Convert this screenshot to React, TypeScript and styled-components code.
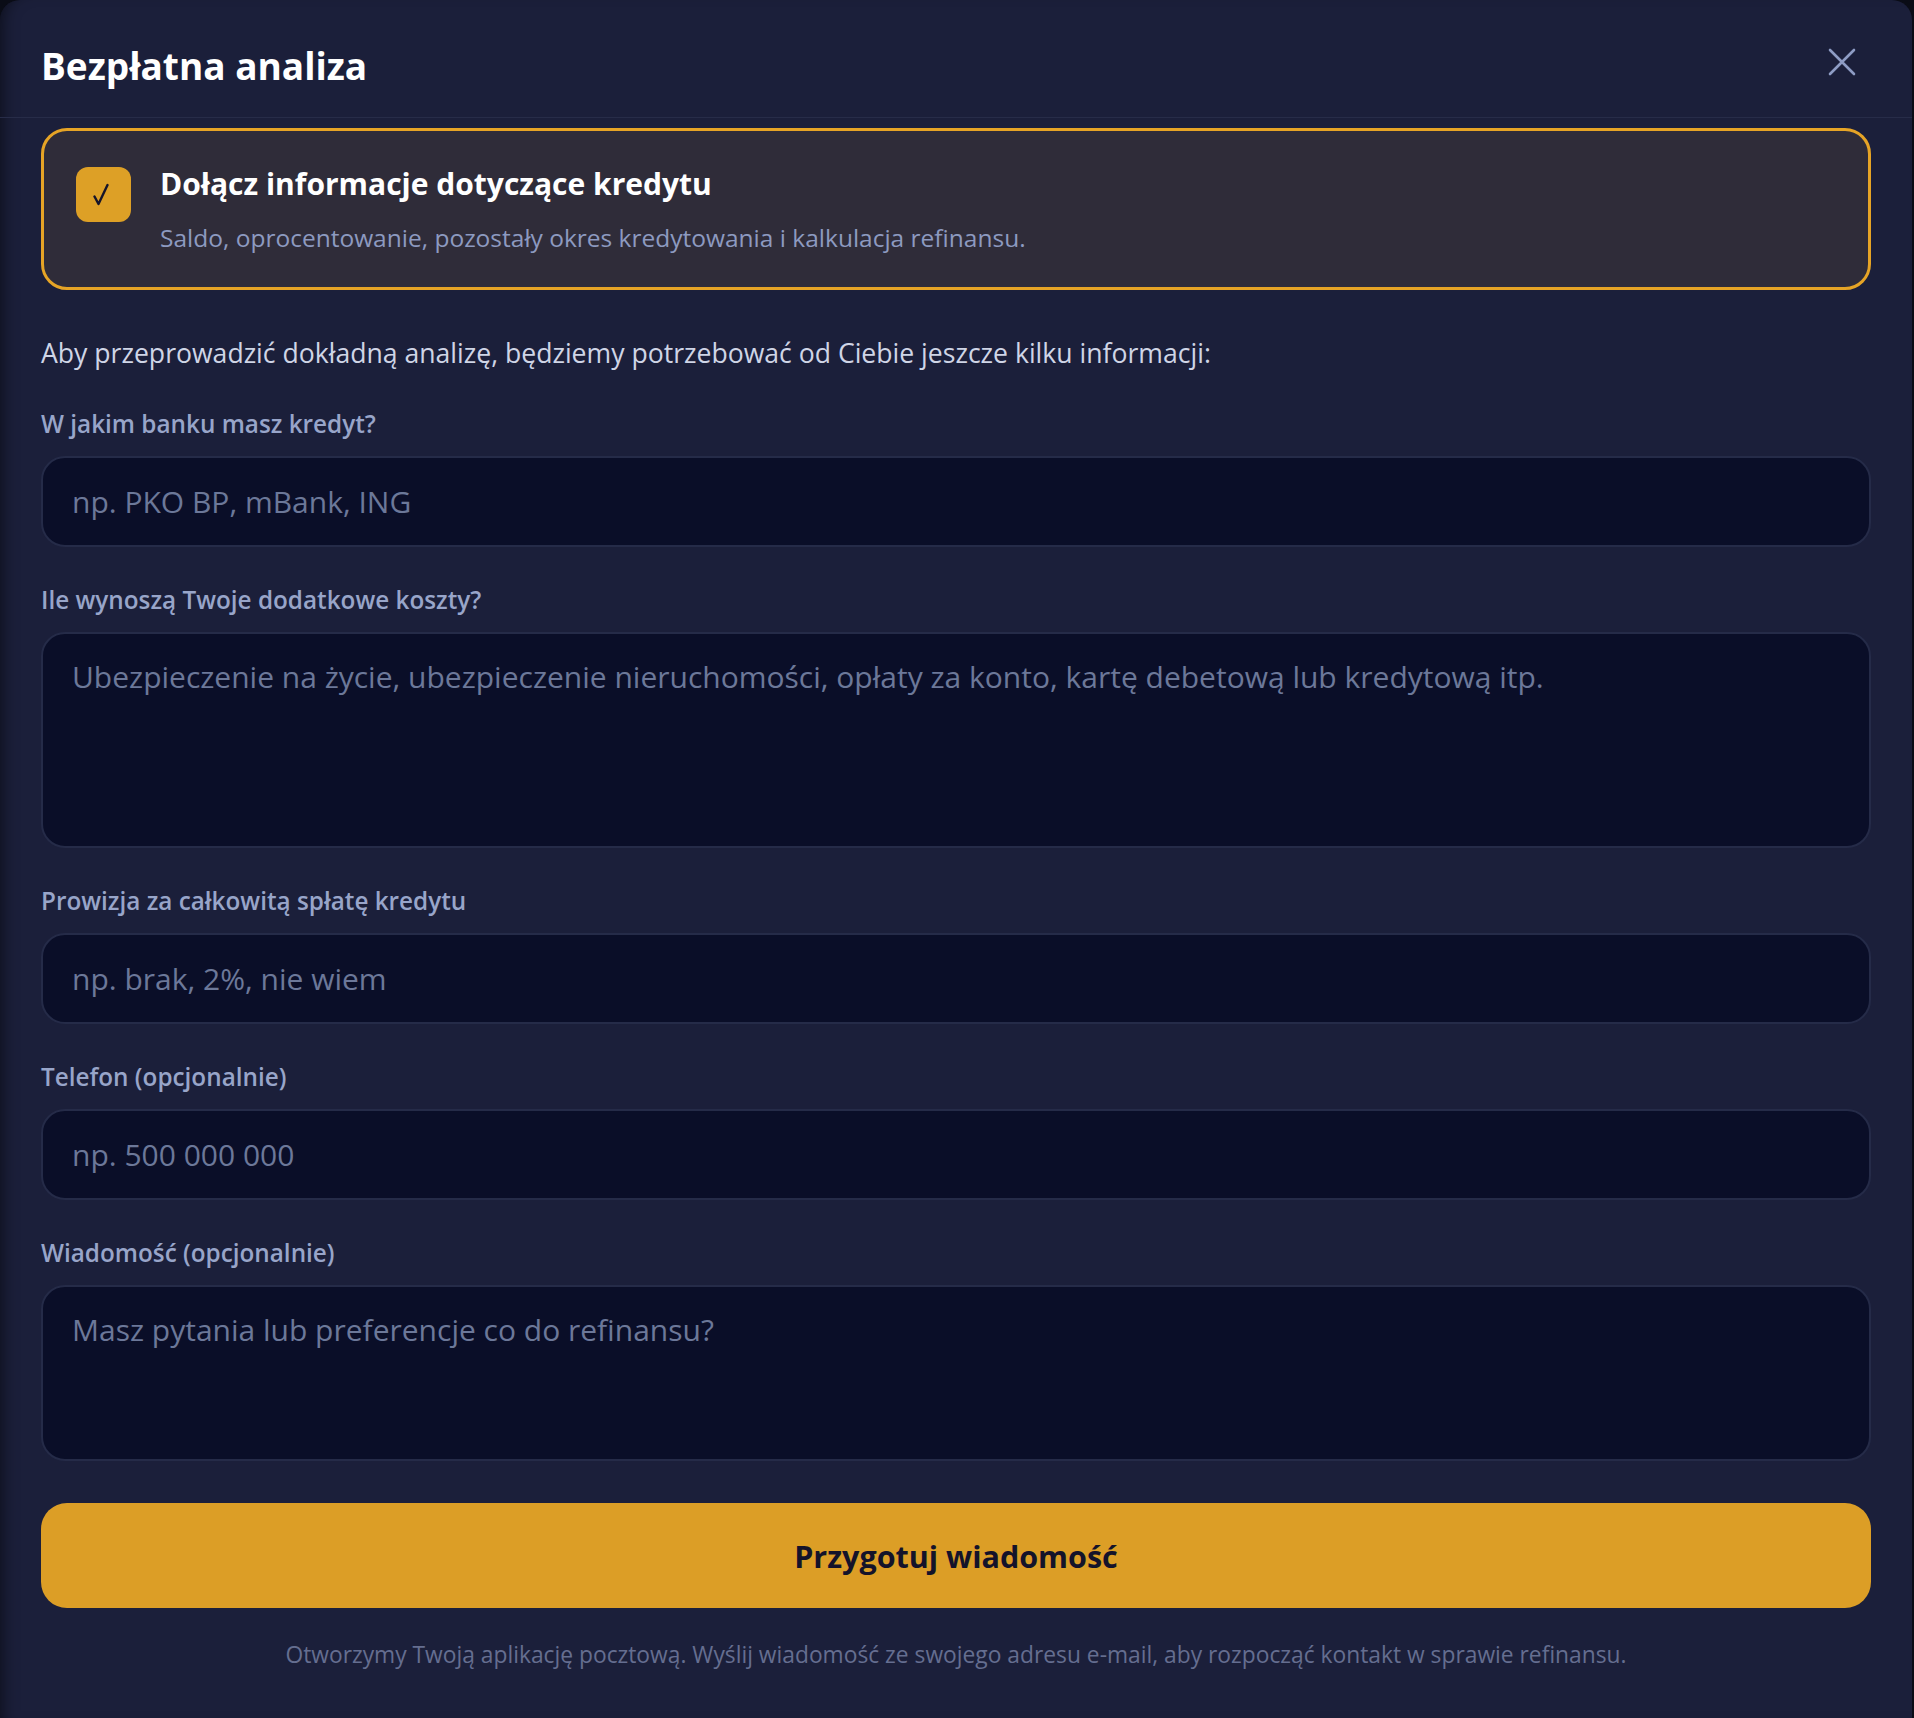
import React from 'react'
import styled, { createGlobalStyle } from 'styled-components'

const GlobalStyle = createGlobalStyle`
  * {
    box-sizing: border-box;
  }
  html,
  body {
    margin: 0;
    padding: 0;
    background: #0a0c16;
  }
  body {
    font-family: 'Open Sans', 'Noto Sans', sans-serif;
  }
`

const Modal = styled.div`
  width: 1912px;
  min-height: 1718px;
  background: #1b1f3a;
  border-radius: 20px 20px 0 0;
  box-shadow: inset 14px 0 16px -12px rgba(0, 0, 0, 0.55);
  display: flex;
  flex-direction: column;
`

const Header = styled.header`
  height: 118px;
  padding: 0 41px;
  display: flex;
  justify-content: space-between;
  align-items: center;
  border-bottom: 1px solid #272c48;
`

const Title = styled.h2`
  margin: 0;
  padding-top: 14px;
  font-size: 37px;
  line-height: 44px;
  font-weight: 700;
  color: #ffffff;
`

const CloseButton = styled.button`
  width: 58px;
  height: 58px;
  margin-top: 7px;
  padding: 0;
  border: none;
  background: transparent;
  display: flex;
  align-items: center;
  justify-content: center;
  cursor: pointer;
  color: #8e9cc4;
`

const Body = styled.div`
  padding: 10px 41px 48px;
  display: flex;
  flex-direction: column;
`

const ConsentCard = styled.label`
  display: flex;
  align-items: flex-start;
  gap: 29px;
  padding: 35px 32px 33px;
  border: 3px solid #e6a426;
  border-radius: 26px;
  background: #2f2c39;
  cursor: pointer;
`

const CheckBox = styled.span<{ $checked: boolean }>`
  flex: none;
  width: 55px;
  height: 55px;
  margin-top: 1px;
  border-radius: 12px;
  background: ${(p) => (p.$checked ? '#dda026' : 'transparent')};
  display: flex;
  align-items: center;
  justify-content: center;
  color: #15142a;
  padding-right: 5px;
`

const CardText = styled.div`
  display: flex;
  flex-direction: column;
  gap: 20px;
`

const CardTitle = styled.span`
  font-size: 30px;
  line-height: 36px;
  font-weight: 700;
  color: #ffffff;
`

const CardHint = styled.span`
  font-size: 24.5px;
  line-height: 32px;
  color: #8d9ac0;
`

const Intro = styled.p`
  margin: 45px 0 0;
  font-size: 26.6px;
  line-height: 36px;
  color: #cfd5e6;
`

const Fields = styled.div`
  margin-top: 37px;
  display: flex;
  flex-direction: column;
  gap: 37px;
`

const Field = styled.div`
  display: flex;
  flex-direction: column;
  gap: 16px;
`

const Label = styled.label`
  font-size: 24.3px;
  line-height: 32px;
  font-weight: 600;
  color: #98a5c9;
`

const controlStyles = `
  width: 100%;
  margin: 0;
  border: 2px solid #252b48;
  border-radius: 24px;
  background: #0a0e28;
  font-family: 'Open Sans', 'Noto Sans', sans-serif;
  font-size: 30px;
  color: #e4e8f4;
  outline: none;
  &::placeholder {
    color: #6c7899;
    opacity: 1;
  }
`

const Input = styled.input`
  ${controlStyles}
  height: 91px;
  padding: 0 29px;
`

const TextArea = styled.textarea<{ $height: number }>`
  ${controlStyles}
  height: ${(p) => p.$height}px;
  padding: 23px 29px;
  line-height: 40px;
  resize: none;
`

const SubmitButton = styled.button`
  margin-top: 42px;
  height: 105px;
  width: 100%;
  border: none;
  border-radius: 26px;
  background: #dc9e26;
  font-family: 'Open Sans', 'Noto Sans', sans-serif;
  font-size: 30.5px;
  font-weight: 700;
  color: #14132a;
  cursor: pointer;
`

const Footnote = styled.p`
  margin: 32px 0 0;
  text-align: center;
  font-size: 22.8px;
  line-height: 30px;
  color: #656e90;
`

const CloseIcon = () => (
  <svg width='28' height='28' viewBox='0 0 28 28' fill='none'>
    <path
      d='M2 2L26 26M26 2L2 26'
      stroke='currentColor'
      strokeWidth='2.6'
      strokeLinecap='round'
    />
  </svg>
)

const CheckIcon = () => (
  <svg width='16' height='24' viewBox='0 0 16 24' fill='none'>
    <path
      d='M1.5 13.5L5.5 21L14.5 2'
      stroke='currentColor'
      strokeWidth='2.4'
      strokeLinecap='round'
      strokeLinejoin='round'
    />
  </svg>
)

interface FieldDef {
  id: string
  label: string
  placeholder: string
  rows?: number
}

const fields: FieldDef[] = [
  { id: 'bank', label: 'W jakim banku masz kredyt?', placeholder: 'np. PKO BP, mBank, ING' },
  {
    id: 'costs',
    label: 'Ile wynoszą Twoje dodatkowe koszty?',
    placeholder:
      'Ubezpieczenie na życie, ubezpieczenie nieruchomości, opłaty za konto, kartę debetową lub kredytową itp.',
    rows: 216,
  },
  { id: 'fee', label: 'Prowizja za całkowitą spłatę kredytu', placeholder: 'np. brak, 2%, nie wiem' },
  { id: 'phone', label: 'Telefon (opcjonalnie)', placeholder: 'np. 500 000 000' },
  {
    id: 'message',
    label: 'Wiadomość (opcjonalnie)',
    placeholder: 'Masz pytania lub preferencje co do refinansu?',
    rows: 176,
  },
]

const App: React.FC = () => {
  const [includeLoan, setIncludeLoan] = React.useState(true)

  return (
    <>
      <GlobalStyle />
      <Modal>
        <Header>
          <Title>Bezpłatna analiza</Title>
          <CloseButton aria-label='Zamknij'>
            <CloseIcon />
          </CloseButton>
        </Header>
        <Body>
          <ConsentCard onClick={() => setIncludeLoan(!includeLoan)}>
            <CheckBox $checked={includeLoan}>{includeLoan && <CheckIcon />}</CheckBox>
            <CardText>
              <CardTitle>Dołącz informacje dotyczące kredytu</CardTitle>
              <CardHint>
                Saldo, oprocentowanie, pozostały okres kredytowania i kalkulacja refinansu.
              </CardHint>
            </CardText>
          </ConsentCard>

          <Intro>
            Aby przeprowadzić dokładną analizę, będziemy potrzebować od Ciebie jeszcze kilku informacji:
          </Intro>

          <Fields>
            {fields.map((f) => (
              <Field key={f.id}>
                <Label htmlFor={f.id}>{f.label}</Label>
                {f.rows ? (
                  <TextArea id={f.id} placeholder={f.placeholder} $height={f.rows} />
                ) : (
                  <Input id={f.id} placeholder={f.placeholder} />
                )}
              </Field>
            ))}
          </Fields>

          <SubmitButton>Przygotuj wiadomość</SubmitButton>
          <Footnote>
            Otworzymy Twoją aplikację pocztową. Wyślij wiadomość ze swojego adresu e-mail, aby
            rozpocząć kontakt w sprawie refinansu.
          </Footnote>
        </Body>
      </Modal>
    </>
  )
}

export default App
